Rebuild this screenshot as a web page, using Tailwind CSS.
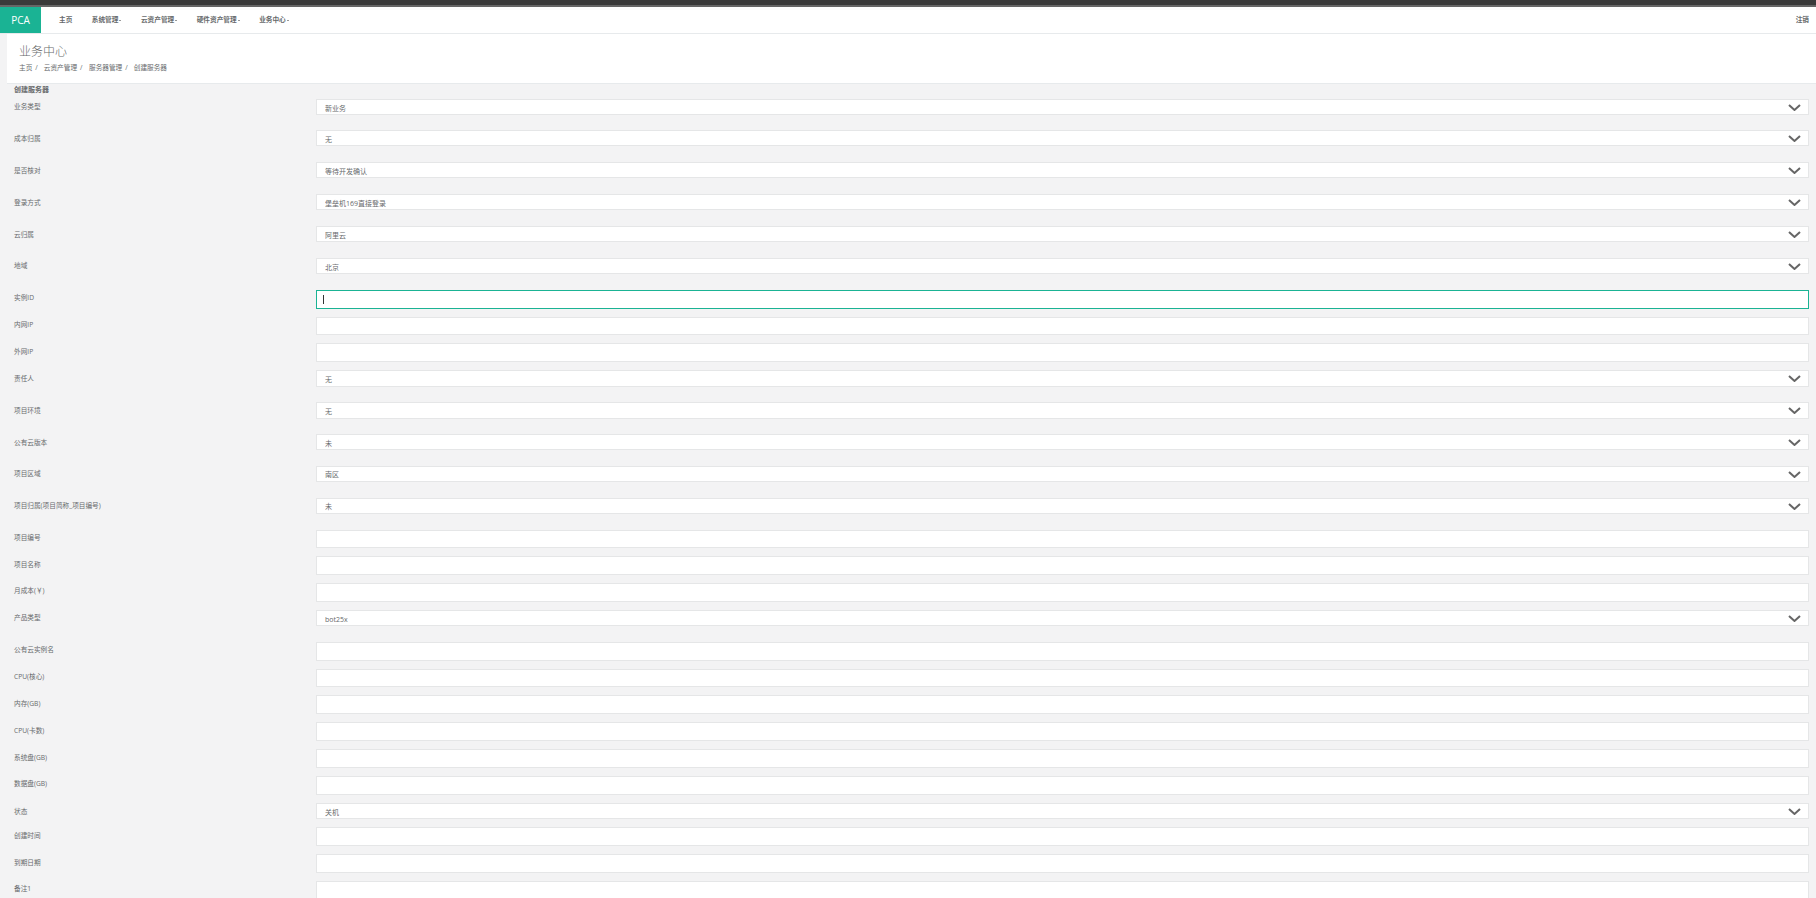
<!DOCTYPE html>
<html lang="zh-CN">
	<head>
		<meta charset="UTF-8" />
		<title>创建服务器</title>
		<script src="https://cdn.jsdelivr.net/npm/@tailwindcss/browser@4"></script>
	</head>
	<body class="h-screen overflow-hidden bg-[#f3f3f4] text-[#676a6c] font-['Open_Sans','Noto_Sans_CJK_SC',sans-serif]">
		<!-- Top bars -->
		<div class="h-[5px] bg-[#3a3a3a]"></div>
		<div class="h-[2px] bg-[#666666]"></div>

		<!-- Navbar -->
		<nav class="flex h-[27px] items-center bg-white border-b border-[#e7eaec] text-[6.67px] font-bold">
			<a class="flex h-[26px] w-[41px] items-center justify-center bg-[#1ab394] text-[10px] font-normal text-white">PCA</a>
			<div class="ml-[18px] flex gap-[19.5px]">
				<a>主页</a>
				<a class="flex items-center gap-[1px]">系统管理<span class="h-px w-[2px] bg-[#999999]"></span></a>
				<a class="flex items-center gap-[1px]">云资产管理<span class="h-px w-[2px] bg-[#999999]"></span></a>
				<a class="flex items-center gap-[1px]">硬件资产管理<span class="h-px w-[2px] bg-[#999999]"></span></a>
				<a class="flex items-center gap-[1px]">业务中心<span class="h-px w-[2px] bg-[#999999]"></span></a>
			</div>
			<a class="ml-auto mr-[7px]">注销</a>
		</nav>

		<!-- Page heading -->
		<header class="ml-[7px] h-[50px] bg-white border-b border-[#e7eaec] pl-[12px] pt-[9px]">
			<h2 class="text-[12px] leading-[18px] font-light">业务中心</h2>
			<ol class="mt-[2px] flex text-[6.67px] leading-[10px]">
				<li>主页</li>
				<li class="ml-[3px]">/</li>
				<li class="ml-[6px]">云资产管理</li>
				<li class="ml-[3px]">/</li>
				<li class="ml-[6.5px]">服务器管理</li>
				<li class="ml-[3px]">/</li>
				<li class="ml-[6px]">创建服务器</li>
			</ol>
		</header>

		<!-- Form -->
		<main class="pl-[14px] pr-[7px]">
			<h5 class="h-[15px] text-[7px] leading-[12px] font-bold">创建服务器</h5>
			<form class="text-[6.67px]">
				<div class="flex h-[31px]">
					<label class="w-[302px] pt-[2px] leading-[12px]">业务类型</label>
					<div class="relative h-[16px] flex-1">
						<select class="h-full w-full appearance-none rounded-none border border-[#e5e6e7] bg-white pl-[8px] pt-[4px] text-[7px]"><option>新业务</option></select>
						<svg class="absolute right-[8px] top-[5px] h-[7px] w-[13px]" viewBox="0 0 13 7" fill="none" stroke="#666666" stroke-width="2"><path d="M1 1l5.500 5 5.500-5" /></svg>
					</div>
				</div>
				<div class="flex h-[32px]">
					<label class="w-[302px] pt-[3px] leading-[12px]">成本归属</label>
					<div class="relative h-[16px] flex-1">
						<select class="h-full w-full appearance-none rounded-none border border-[#e5e6e7] bg-white pl-[8px] pt-[4px] text-[7px]"><option>无</option></select>
						<svg class="absolute right-[8px] top-[5px] h-[7px] w-[13px]" viewBox="0 0 13 7" fill="none" stroke="#666666" stroke-width="2"><path d="M1 1l5.500 5 5.500-5" /></svg>
					</div>
				</div>
				<div class="flex h-[32px]">
					<label class="w-[302px] pt-[3px] leading-[12px]">是否核对</label>
					<div class="relative h-[16px] flex-1">
						<select class="h-full w-full appearance-none rounded-none border border-[#e5e6e7] bg-white pl-[8px] pt-[4px] text-[7px]"><option>等待开发确认</option></select>
						<svg class="absolute right-[8px] top-[5px] h-[7px] w-[13px]" viewBox="0 0 13 7" fill="none" stroke="#666666" stroke-width="2"><path d="M1 1l5.500 5 5.500-5" /></svg>
					</div>
				</div>
				<div class="flex h-[32px]">
					<label class="w-[302px] pt-[3px] leading-[12px]">登录方式</label>
					<div class="relative h-[16px] flex-1">
						<select class="h-full w-full appearance-none rounded-none border border-[#e5e6e7] bg-white pl-[8px] pt-[4px] text-[7px]"><option>堡垒机169直接登录</option></select>
						<svg class="absolute right-[8px] top-[5px] h-[7px] w-[13px]" viewBox="0 0 13 7" fill="none" stroke="#666666" stroke-width="2"><path d="M1 1l5.500 5 5.500-5" /></svg>
					</div>
				</div>
				<div class="flex h-[32px]">
					<label class="w-[302px] pt-[3px] leading-[12px]">云归属</label>
					<div class="relative h-[16px] flex-1">
						<select class="h-full w-full appearance-none rounded-none border border-[#e5e6e7] bg-white pl-[8px] pt-[4px] text-[7px]"><option>阿里云</option></select>
						<svg class="absolute right-[8px] top-[5px] h-[7px] w-[13px]" viewBox="0 0 13 7" fill="none" stroke="#666666" stroke-width="2"><path d="M1 1l5.500 5 5.500-5" /></svg>
					</div>
				</div>
				<div class="flex h-[32px]">
					<label class="w-[302px] pt-[2px] leading-[12px]">地域</label>
					<div class="relative h-[16px] flex-1">
						<select class="h-full w-full appearance-none rounded-none border border-[#e5e6e7] bg-white pl-[8px] pt-[4px] text-[7px]"><option>北京</option></select>
						<svg class="absolute right-[8px] top-[5px] h-[7px] w-[13px]" viewBox="0 0 13 7" fill="none" stroke="#666666" stroke-width="2"><path d="M1 1l5.500 5 5.500-5" /></svg>
					</div>
				</div>
				<div class="flex h-[27px]">
					<label class="w-[302px] pt-[2px] leading-[12px]">实例ID</label>
					<div class="relative h-[19px] flex-1">
						<input class="h-full w-full border border-[#1ab394] bg-white outline-none" />
						<span class="absolute left-[7px] top-[5px] h-[9px] w-px bg-[#333333]"></span>
					</div>
				</div>
				<div class="flex h-[26px]">
					<label class="w-[302px] pt-[2px] leading-[12px]">内网IP</label>
					<input class="h-[18px] flex-1 border border-[#e5e6e7] bg-white" />
				</div>
				<div class="flex h-[27px]">
					<label class="w-[302px] pt-[3px] leading-[12px]">外网IP</label>
					<input class="h-[19px] flex-1 border border-[#e5e6e7] bg-white" />
				</div>
				<div class="flex h-[32px]">
					<label class="w-[302px] pt-[3px] leading-[12px]">责任人</label>
					<div class="relative h-[17px] flex-1">
						<select class="h-full w-full appearance-none rounded-none border border-[#e5e6e7] bg-white pl-[8px] pt-[4px] text-[7px]"><option>无</option></select>
						<svg class="absolute right-[8px] top-[5px] h-[7px] w-[13px]" viewBox="0 0 13 7" fill="none" stroke="#666666" stroke-width="2"><path d="M1 1l5.500 5 5.500-5" /></svg>
					</div>
				</div>
				<div class="flex h-[32px]">
					<label class="w-[302px] pt-[3px] leading-[12px]">项目环境</label>
					<div class="relative h-[17px] flex-1">
						<select class="h-full w-full appearance-none rounded-none border border-[#e5e6e7] bg-white pl-[8px] pt-[4px] text-[7px]"><option>无</option></select>
						<svg class="absolute right-[8px] top-[5px] h-[7px] w-[13px]" viewBox="0 0 13 7" fill="none" stroke="#666666" stroke-width="2"><path d="M1 1l5.500 5 5.500-5" /></svg>
					</div>
				</div>
				<div class="flex h-[32px]">
					<label class="w-[302px] pt-[3px] leading-[12px]">公有云版本</label>
					<div class="relative h-[16px] flex-1">
						<select class="h-full w-full appearance-none rounded-none border border-[#e5e6e7] bg-white pl-[8px] pt-[4px] text-[7px]"><option>未</option></select>
						<svg class="absolute right-[8px] top-[5px] h-[7px] w-[13px]" viewBox="0 0 13 7" fill="none" stroke="#666666" stroke-width="2"><path d="M1 1l5.500 5 5.500-5" /></svg>
					</div>
				</div>
				<div class="flex h-[32px]">
					<label class="w-[302px] pt-[2px] leading-[12px]">项目区域</label>
					<div class="relative h-[16px] flex-1">
						<select class="h-full w-full appearance-none rounded-none border border-[#e5e6e7] bg-white pl-[8px] pt-[2px] text-[7px]"><option>南区</option></select>
						<svg class="absolute right-[8px] top-[5px] h-[7px] w-[13px]" viewBox="0 0 13 7" fill="none" stroke="#666666" stroke-width="2"><path d="M1 1l5.500 5 5.500-5" /></svg>
					</div>
				</div>
				<div class="flex h-[32px]">
					<label class="w-[302px] pt-[2px] leading-[12px]">项目归属(项目简称_项目编号)</label>
					<div class="relative h-[16px] flex-1">
						<select class="h-full w-full appearance-none rounded-none border border-[#e5e6e7] bg-white pl-[8px] pt-[2px] text-[7px]"><option>未</option></select>
						<svg class="absolute right-[8px] top-[5px] h-[7px] w-[13px]" viewBox="0 0 13 7" fill="none" stroke="#666666" stroke-width="2"><path d="M1 1l5.500 5 5.500-5" /></svg>
					</div>
				</div>
				<div class="flex h-[26px]">
					<label class="w-[302px] pt-[2px] leading-[12px]">项目编号</label>
					<input class="h-[18px] flex-1 border border-[#e5e6e7] bg-white" />
				</div>
				<div class="flex h-[27px]">
					<label class="w-[302px] pt-[3px] leading-[12px]">项目名称</label>
					<input class="h-[19px] flex-1 border border-[#e5e6e7] bg-white" />
				</div>
				<div class="flex h-[27px]">
					<label class="w-[302px] pt-[2px] leading-[12px]">月成本(￥)</label>
					<input class="h-[19px] flex-1 border border-[#e5e6e7] bg-white" />
				</div>
				<div class="flex h-[32px]">
					<label class="w-[302px] pt-[2px] leading-[12px]">产品类型</label>
					<div class="relative h-[16px] flex-1">
						<select class="h-full w-full appearance-none rounded-none border border-[#e5e6e7] bg-white pl-[8px] pt-[4px] text-[7px]"><option>bot25x</option></select>
						<svg class="absolute right-[8px] top-[5px] h-[7px] w-[13px]" viewBox="0 0 13 7" fill="none" stroke="#666666" stroke-width="2"><path d="M1 1l5.500 5 5.500-5" /></svg>
					</div>
				</div>
				<div class="flex h-[27px]">
					<label class="w-[302px] pt-[2px] leading-[12px]">公有云实例名</label>
					<input class="h-[19px] flex-1 border border-[#e5e6e7] bg-white" />
				</div>
				<div class="flex h-[26px]">
					<label class="w-[302px] pt-[2px] leading-[12px]">CPU(核心)</label>
					<input class="h-[18px] flex-1 border border-[#e5e6e7] bg-white" />
				</div>
				<div class="flex h-[27px]">
					<label class="w-[302px] pt-[3px] leading-[12px]">内存(GB)</label>
					<input class="h-[19px] flex-1 border border-[#e5e6e7] bg-white" />
				</div>
				<div class="flex h-[27px]">
					<label class="w-[302px] pt-[3px] leading-[12px]">CPU(卡数)</label>
					<input class="h-[19px] flex-1 border border-[#e5e6e7] bg-white" />
				</div>
				<div class="flex h-[27px]">
					<label class="w-[302px] pt-[3px] leading-[12px]">系统盘(GB)</label>
					<input class="h-[19px] flex-1 border border-[#e5e6e7] bg-white" />
				</div>
				<div class="flex h-[27px]">
					<label class="w-[302px] pt-[2px] leading-[12px]">数据盘(GB)</label>
					<input class="h-[19px] flex-1 border border-[#e5e6e7] bg-white" />
				</div>
				<div class="flex h-[24px]">
					<label class="w-[302px] pt-[3px] leading-[12px]">状态</label>
					<div class="relative h-[16px] flex-1">
						<select class="h-full w-full appearance-none rounded-none border border-[#e5e6e7] bg-white pl-[8px] pt-[4px] text-[7px]"><option>关机</option></select>
						<svg class="absolute right-[8px] top-[5px] h-[7px] w-[13px]" viewBox="0 0 13 7" fill="none" stroke="#666666" stroke-width="2"><path d="M1 1l5.500 5 5.500-5" /></svg>
					</div>
				</div>
				<div class="flex h-[27px]">
					<label class="w-[302px] pt-[3px] leading-[12px]">创建时间</label>
					<input class="h-[19px] flex-1 border border-[#e5e6e7] bg-white" />
				</div>
				<div class="flex h-[27px]">
					<label class="w-[302px] pt-[3px] leading-[12px]">到期日期</label>
					<input class="h-[19px] flex-1 border border-[#e5e6e7] bg-white" />
				</div>
				<div class="flex h-[27px]">
					<label class="w-[302px] pt-[2px] leading-[12px]">备注1</label>
					<input class="h-[19px] flex-1 border border-[#e5e6e7] bg-white" />
				</div>
			</form>
		</main>
	</body>
</html>
